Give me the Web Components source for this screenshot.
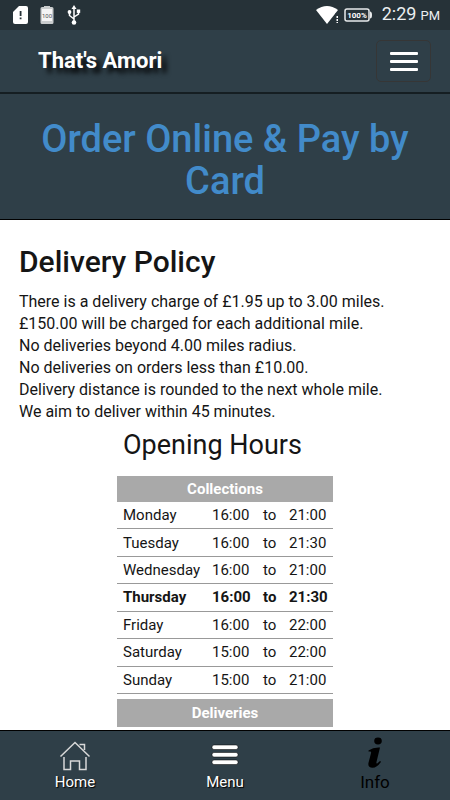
<!DOCTYPE html>
<html lang="en">
<head>
<meta charset="utf-8">
<meta name="viewport" content="width=device-width, initial-scale=1">
<title>That's Amori</title>
<style>
  html, body { margin: 0; height: 100%; }
  body { font-family: Roboto, "Liberation Sans", sans-serif; color: #151515; background: #fff; }
</style>
</head>
<body>
<amori-app></amori-app>

<script>
const define = (name, html) => {
  const template = document.createElement('template');
  template.innerHTML = html;
  customElements.define(name, class extends HTMLElement {
    constructor() {
      super();
      this.attachShadow({ mode: 'open' }).append(template.content.cloneNode(true));
    }
  });
};

define('status-bar', `
  <style>
    :host { display: flex; align-items: center; justify-content: space-between; height: 30px; padding: 0 10px 0 13px; box-sizing: border-box; background: #263238; color: #fff; }
    div { display: flex; align-items: center; }
    .left { gap: 12px; }
    svg { display: block; }
    .battery { margin: 0 10px 0 5px; }
    time { display: flex; align-items: baseline; gap: 4px; font-size: 18px; line-height: 32px; color: #eceff0; }
    small { font-size: 13px; }
  </style>
  <div class="left">
    <svg width="15" height="20" viewBox="0 0 15 20"><path d="M6 1h7q2 0 2 2v14q0 2-2 2H2q-2 0-2-2V7z" fill="#fff"/><path d="M6.700 6h1.800v5H6.700zM6.700 12.500h1.800v1.800H6.700z" fill="#263238"/></svg>
    <svg width="14" height="20" viewBox="0 0 14 20"><path d="M4 1h6v1h2q1.500 0 1.500 1.500v14q0 1.500-1.500 1.500H2Q.5 19 .5 17.500v-14Q.5 2 2 2h2z" fill="#c9cccd"/><path d="M2 4h10v12H2z" fill="#f4f4f4"/><text x="7" y="12.500" font-size="6" text-anchor="middle" fill="#555">100</text></svg>
    <svg width="16" height="22" viewBox="0 0 16 22"><g fill="none" stroke="#fff" stroke-width="1.500"><path d="M8 3v15M8 15L3.500 11.500V8M8 13l4.500-3V7"/></g><path d="M8 1l2.500 4h-5z" fill="#fff"/><circle cx="3.500" cy="8" r="1.900" fill="#fff"/><path d="M10.800 5.500h3.400v3.400h-3.400z" fill="#fff"/><circle cx="8" cy="18.500" r="2.300" fill="#fff"/></svg>
  </div>
  <div>
    <svg width="23" height="20" viewBox="0 0 23 20"><path d="M0 5Q11-3 22 5L11 19z" fill="#fff"/><path d="M19 9l4-3v13h-4z" fill="#263238"/><path d="M20.500 11h1.500v2h-1.500zM20.500 14h1.500v2h-1.500zM20.500 17h1.500v1h-1.500z" fill="#fff"/></svg>
    <svg class="battery" width="28" height="14" viewBox="0 0 28 14"><rect x="1" y="1" width="24" height="12" rx="2" fill="none" stroke="#e8eaeb" stroke-width="1.500"/><path d="M26 3.500q2 0 2 3.500t-2 3.500z" fill="#e8eaeb"/><text x="13" y="10" font-size="8" font-weight="700" text-anchor="middle" fill="#fff">100%</text></svg>
    <time>2:29<small>PM</small></time>
  </div>
`);

define('site-header', `
  <style>
    :host { display: flex; align-items: center; justify-content: space-between; height: 64px; padding: 0 19px 0 38px; box-sizing: border-box; background: #2f3f48; border-bottom: 2px solid #151e22; }
    a { color: #fff; font-size: 22px; line-height: 30px; font-weight: 700; text-decoration: none; text-shadow: 5px 5px 5px #000; }
    button { display: flex; flex-direction: column; gap: 5px; align-items: center; justify-content: center; width: 55px; height: 42px; padding: 0; background: none; border: 1px solid #363636; border-radius: 5px; }
    i { width: 28px; height: 3px; border-radius: 1px; background: #fff; }
  </style>
  <a href="#"><slot></slot></a>
  <button type="button" aria-label="Toggle navigation"><i></i><i></i><i></i></button>
`);

define('order-banner', `
  <style>
    :host { display: block; padding: 24px 19px 17px; background: #2f3f48; border-bottom: 1px solid #000; text-align: center; }
    h1 { margin: 0; font-size: 38px; line-height: 42px; font-weight: 500; }
    a { color: #428bca; text-decoration: none; }
  </style>
  <h1><a href="#order"><slot></slot></a></h1>
`);

define('delivery-policy', `
  <style>
    :host { display: block; padding: 25px 19px 0; }
    h2 { margin: 0 0 12px; font-size: 30px; line-height: 34px; font-weight: 500; }
    p { margin: 0; font-size: 16px; line-height: 22px; }
  </style>
  <h2>Delivery Policy</h2>
  <p>There is a delivery charge of £1.95 up to 3.00 miles.<br>
  £150.00 will be charged for each additional mile.<br>
  No deliveries beyond 4.00 miles radius.<br>
  No deliveries on orders less than £10.00.<br>
  Delivery distance is rounded to the next whole mile.<br>
  We aim to deliver within 45 minutes.</p>
`);

define('opening-hours', `
  <style>
    :host { display: block; width: 216px; margin: 0 auto; }
    h2 { margin: 4px 0 13px; padding-left: 6px; font-size: 27px; line-height: 36px; font-weight: 400; white-space: nowrap; }
    table { width: 100%; border-collapse: separate; border-spacing: 0; font-size: 15px; line-height: 20px; }
    table + table { margin-top: 5px; }
    caption { line-height: 26px; font-weight: 700; background: #a9a9a9; color: #fff; }
    table + table caption { line-height: 28px; }
    .hours { height: 192px; }
    th, td { padding: 0 0 0 6px; text-align: left; font-weight: inherit; border-bottom: 1px solid #999; }
    th { width: 83px; }
    td:nth-child(2) { width: 45px; }
    td:nth-child(3) { width: 20px; }
    .today { font-weight: 700; }
  </style>
  <h2>Opening Hours</h2>
  <table class="hours">
    <caption>Collections</caption>
    <tbody>
      <tr><th scope="row">Monday</th><td>16:00</td><td>to</td><td>21:00</td></tr>
      <tr><th scope="row">Tuesday</th><td>16:00</td><td>to</td><td>21:30</td></tr>
      <tr><th scope="row">Wednesday</th><td>16:00</td><td>to</td><td>21:00</td></tr>
      <tr class="today"><th scope="row">Thursday</th><td>16:00</td><td>to</td><td>21:30</td></tr>
      <tr><th scope="row">Friday</th><td>16:00</td><td>to</td><td>22:00</td></tr>
      <tr><th scope="row">Saturday</th><td>15:00</td><td>to</td><td>22:00</td></tr>
      <tr><th scope="row">Sunday</th><td>15:00</td><td>to</td><td>21:00</td></tr>
    </tbody>
  </table>
  <table><caption>Deliveries</caption></table>
`);

define('nav-item', `
  <style>
    :host { flex: 1; display: block; color: #fff; text-shadow: 1px 1px 1px #000; }
    :host([current]) { color: #000; font-size: 17px; text-shadow: none; }
    a { display: flex; flex-direction: column; align-items: center; gap: 1px; color: inherit; text-decoration: none; line-height: 20px; }
    ::slotted(svg) { display: block; }
  </style>
  <a href="#"><slot name="icon"></slot><span><slot></slot></span></a>
`);

define('tab-bar', `
  <style>
    :host { display: flex; height: 70px; box-sizing: border-box; padding-top: 6px; background: #2f3f48; border-top: 1px solid #000; font-size: 15px; }
  </style>
  <nav-item>
    <svg slot="icon" width="32" height="34" viewBox="0 0 32 34"><g fill="none" stroke="#d8d8d8" stroke-width="1.500"><path d="M1.500 19.500L16 5.500l14.500 14M5 20v12.500h6.500V24h9v8.500H27V20M20.500 7.500h5V13"/></g></svg>Home</nav-item>
  <nav-item>
    <svg slot="icon" width="32" height="34" viewBox="0 0 32 34"><g stroke="#000" stroke-width=".5" fill="#fff"><rect x="3" y="8" width="26" height="4.500" rx="2"/><rect x="3" y="15.500" width="26" height="4.500" rx="2"/><rect x="3" y="23" width="26" height="4.500" rx="2"/></g></svg>Menu</nav-item>
  <nav-item current>
    <svg slot="icon" width="32" height="34" viewBox="0 0 32 34"><ellipse cx="19" cy="4" rx="3.800" ry="3.400"/><path d="M9.500 13.500q5-3.500 11.500-3l-3.500 14.500q-.5 2 1 1.200l2.500-2.200 1 .8q-4 6-8.500 6-5 0-4-5l2.500-9.500q.5-2-1-1.800h-1.500z"/></svg>Info</nav-item>
`);

define('amori-app', `
  <style>
    :host { display: flex; flex-direction: column; height: 100vh; }
    main { flex: 1; min-height: 0; overflow: hidden; }
  </style>
  <status-bar></status-bar>
  <site-header>That's Amori</site-header>
  <main>
    <order-banner>Order Online &amp; Pay by Card</order-banner>
    <delivery-policy></delivery-policy>
    <opening-hours></opening-hours>
  </main>
  <tab-bar></tab-bar>
`);
</script>
</body>
</html>
